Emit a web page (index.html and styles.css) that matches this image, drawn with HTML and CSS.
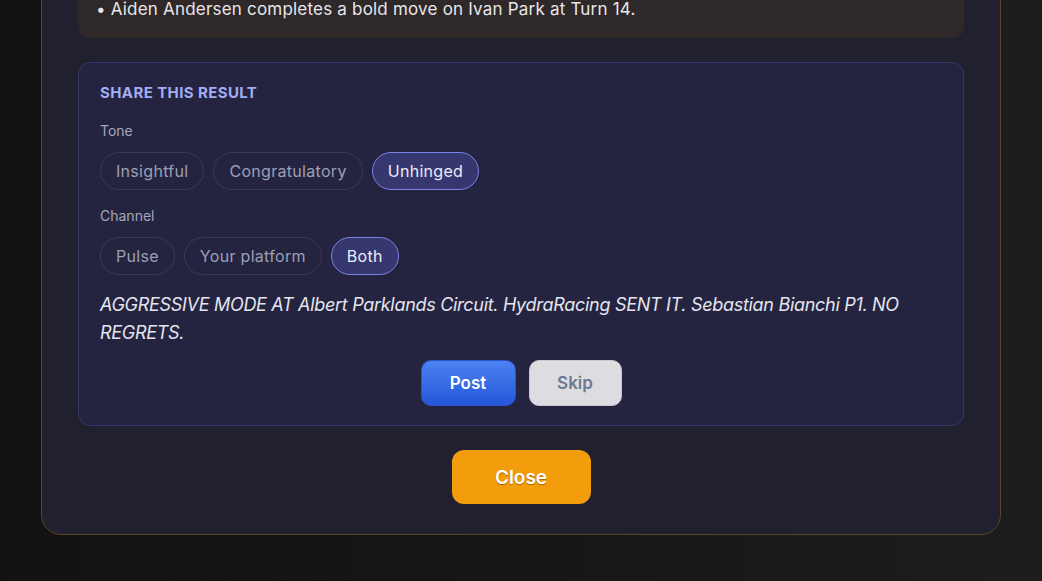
FILE: index.html
```html
<!DOCTYPE html>
<html lang="en">
<head>
  <meta charset="UTF-8">
  <meta name="viewport" content="width=device-width, initial-scale=1">
  <title>Race result</title>
  <link rel="stylesheet" href="styles.css">
</head>
<body>

<div class="overlay">
  <div class="modal">
    <div class="summary">
      <p>• Aiden Andersen completes a bold move on Ivan Park at Turn 14.</p>
    </div>

    <div class="share">
      <h3>SHARE THIS RESULT</h3>

      <div class="label">Tone</div>
      <div class="chips">
        <button class="chip">Insightful</button>
        <button class="chip">Congratulatory</button>
        <button class="chip active">Unhinged</button>
      </div>

      <div class="label">Channel</div>
      <div class="chips">
        <button class="chip">Pulse</button>
        <button class="chip">Your platform</button>
        <button class="chip active">Both</button>
      </div>

      <p class="caption">AGGRESSIVE MODE AT Albert Parklands Circuit. HydraRacing SENT IT. Sebastian Bianchi P1. NO REGRETS.</p>

      <div class="actions">
        <button class="btn post">Post</button>
        <button class="btn skip">Skip</button>
      </div>
    </div>

    <div class="footer">
      <button class="close">Close</button>
    </div>
  </div>
</div>

</body>
</html>
```

FILE: styles.css
```css
body {
  margin: 0;
  height: 581px;
  overflow: hidden;
  background: linear-gradient(to right, #121212, #161616 50%, #1d1d1d);
  font-family: Inter, "Noto Sans", sans-serif;
  color: #e6e6ee;
}

.overlay {
  display: flex;
  justify-content: center;
}

/* modal is scrolled, its top sits above the window */
.modal {
  width: 960px;
  margin-top: -95px;
  padding: 24px 36px 30px;
  box-sizing: border-box;
  background: #20202f;
  border: 1px solid #5b4428;
  border-radius: 20px;
}

.summary {
  background: #2e2829;
  border-radius: 12px;
  padding: 66px 18px 16px;
}

.summary p {
  margin: 0;
  font-size: 17px;
  line-height: 26px;
  letter-spacing: 0.2px;
  color: #e8e6ea;
}

.share {
  margin-top: 24px;
  background: #242440;
  border: 1px solid #35356a;
  border-radius: 12px;
  padding: 19px 21px 19px;
}

.share h3 {
  margin: 0 0 17px;
  font-size: 15px;
  line-height: 22px;
  font-weight: 700;
  letter-spacing: 0.4px;
  color: #a3acf5;
}

.label {
  font-size: 14px;
  line-height: 20px;
  color: #a4a6b8;
  margin-bottom: 11px;
}

.chips {
  display: flex;
  gap: 9px;
  margin-bottom: 16px;
}

.chip {
  height: 38px;
  padding: 0 15px;
  border-radius: 19px;
  border: 1px solid #3a3a55;
  background: transparent;
  font-family: inherit;
  font-size: 16px;
  letter-spacing: 0.3px;
  color: #9ca0b4;
}

.chip.active {
  background: #35376e;
  border-color: #7b83e6;
  color: #ececf8;
}

.caption {
  margin: 0 0 13px;
  font-size: 18px;
  line-height: 28px;
  font-style: italic;
  letter-spacing: -0.3px;
  color: #e4e4ee;
}

.actions {
  display: flex;
  justify-content: center;
  gap: 13px;
}

.btn {
  height: 46px;
  border-radius: 10px;
  font-family: inherit;
  font-size: 17px;
  font-weight: 600;
}

.post {
  width: 95px;
  border: 1px solid #2a52c8;
  background: linear-gradient(#4c82f1, #2457d9);
  color: white;
}

.skip {
  width: 93px;
  border: 1px solid #c8c8cf;
  background: #dcdce1;
  color: #6d7a8f;
}

.footer {
  display: flex;
  justify-content: center;
  margin-top: 24px;
}

.close {
  width: 139px;
  height: 54px;
  border: none;
  border-radius: 12px;
  background: #f39d0c;
  color: white;
  font-family: inherit;
  font-size: 19px;
  font-weight: 600;
  text-shadow: 0 1px 1px rgba(120, 60, 0, 0.6);
}
```
